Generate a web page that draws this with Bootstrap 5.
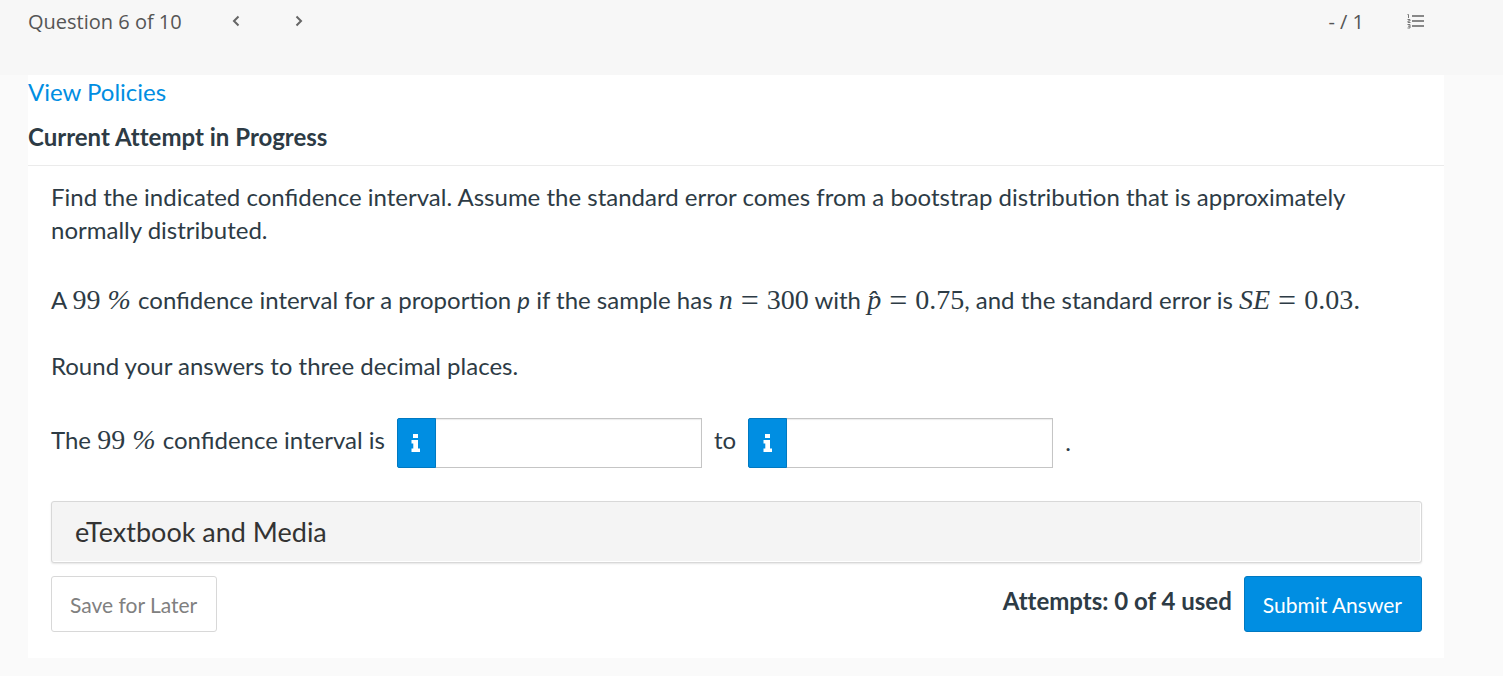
<!DOCTYPE html>
<html lang="en">
<head>
<meta charset="utf-8">
<meta name="viewport" content="width=device-width, initial-scale=1">
<title>Question 6 of 10</title>
<link href="https://cdn.jsdelivr.net/npm/bootstrap@5.3.0/dist/css/bootstrap.min.css" rel="stylesheet">
<style>
  body { background: #fafafa; color: #2d3b45; font-family: Lato, sans-serif; font-size: 24px; line-height: 33px; }
  .topbar { background: #f7f7f7; color: #555; font-family: "Open Sans", sans-serif; font-size: 20px; line-height: 28px; padding: 8px 78px 39px 28px; }
  .nav-icon { color: #666; width: 22px; height: 24px; padding: 0 0 2px; }
  .pager-prev { margin-left: 43px; }
  .pager-next { margin-left: 41px; }
  .toc { margin-left: 43px; width: auto; }
  .panel { background: #fff; margin: 0 59px 0 28px; padding-bottom: 26px; }
  .policies { color: #008ee2; }
  .attempt-title { font-size: 24px; line-height: 33px; border-bottom: 1px solid #ebebeb; padding: 12px 0; }
  .attempt-title, .used, .etext { font-variant-ligatures: none; }
  .question { padding: 14px 22px 0 23px; }
  .given { margin: 37px 0 33px; }
  .math { font-family: "Liberation Serif", serif; font-size: 28px; line-height: 24px; }
  .math .rel { font-size: 32px; line-height: 20px; margin: 0 8px; vertical-align: -2px; }
  .pct { margin: 0 1px 0 0; }
  .answer { margin-top: 36px; gap: 12px; }
  .answer label { padding-bottom: 8px; }
  .answer .stop { padding-bottom: 4px; }
  .answer .input-group { width: 305px; }
  .answer .btn { width: 39px; height: 50px; border-radius: 2px 0 0 2px; }
  .answer .form-control { border: 1px solid #c5c5c5; border-radius: 0; box-shadow: inset 0 1px 1px rgba(0,0,0,.08); }
  .btn-blue, .btn-blue:hover { background: #008ee2; border: 1px solid #0079c1; color: #fff; }
  .etext { background: #f4f4f4; border: 1px solid #d8d8d8; border-radius: 3px; box-shadow: inset -1px -1px 0 #fff, 0 1px 2px rgba(0,0,0,.1); color: #333; font-size: 27px; line-height: 34px; padding: 13px 23px; margin-top: 33px; }
  .actions { margin-top: 13px; }
  .actions .btn { font-size: 21px; line-height: 30px; padding: 13px 19px 11px 18px; border-radius: 3px; }
  .btn-save { background: #fff; border-color: #d8d8d8; color: #808080; }
  .used { padding-bottom: 7px; }
</style>
</head>
<body>
<header class="topbar d-flex align-items-center">
  <span>Question 6 of 10</span>
  <button class="nav-icon pager-prev btn border-0 d-flex align-items-center justify-content-center" aria-label="Previous question">
    <svg width="8" height="12" viewBox="0 0 8 12" fill="none" stroke="currentColor" stroke-width="2"><path d="M6.5 1.5 2 6l4.500 4.500"/></svg>
  </button>
  <button class="nav-icon pager-next btn border-0 d-flex align-items-center justify-content-center" aria-label="Next question">
    <svg width="8" height="12" viewBox="0 0 8 12" fill="none" stroke="currentColor" stroke-width="2"><path d="M1.500 1.500 6 6l-4.500 4.500"/></svg>
  </button>
  <span class="ms-auto">- / 1</span>
  <button class="nav-icon toc btn border-0 d-flex align-items-center" aria-label="Question list">
    <svg width="18" height="16" viewBox="0 0 18 16" fill="none" stroke="#888">
      <path stroke-width="2" d="M5 3h12M5 8h12M5 13h12"/>
      <path stroke="#777" stroke-width="1" d="M.5 1.500h1V5M.5 6.500H3V8H1v1.500h2.500M.5 11.500h2.500v3.500H.5M1 13.200h2"/>
    </svg>
  </button>
</header>

<main class="panel">
  <a href="#" class="policies text-decoration-none d-inline-block">View Policies</a>
  <h1 class="attempt-title fw-bold mb-0">Current Attempt in Progress</h1>
  <div class="question">
    <p class="mb-0">Find the indicated confidence interval. Assume the standard error comes from a bootstrap distribution that is approximately normally distributed.</p>
    <p class="given">A <span class="math">99 <i class="pct">%</i></span> confidence interval for a proportion <i>p</i> if the sample has <span class="math"><i>n</i><span class="rel">=</span>300</span> with <span class="math"><i>p&#770;</i><span class="rel">=</span>0.75</span>, and the standard error is <span class="math"><i>SE</i><span class="rel">=</span>0.03.</span></p>
    <p class="mb-0">Round your answers to three decimal places.</p>
    <div class="answer d-flex flex-wrap align-items-center">
      <label for="low">The <span class="math">99 <i class="pct">%</i></span> confidence interval is</label>
      <div class="input-group">
        <button class="btn btn-blue p-0 d-flex align-items-center justify-content-center" aria-label="Answer format"><svg width="10" height="18" viewBox="0 0 10 18" fill="currentColor"><path d="M2 0h5v4H2zM.5 6H7v8.500h2V18H.5v-3.500h1.800V9.500H.5z"/></svg></button>
        <input id="low" class="form-control" type="text">
      </div>
      <label for="high">to</label>
      <div class="input-group">
        <button class="btn btn-blue p-0 d-flex align-items-center justify-content-center" aria-label="Answer format"><svg width="10" height="18" viewBox="0 0 10 18" fill="currentColor"><path d="M2 0h5v4H2zM.5 6H7v8.500h2V18H.5v-3.500h1.800V9.500H.5z"/></svg></button>
        <input id="high" class="form-control" type="text">
      </div>
      <span class="stop">.</span>
    </div>
    <button class="etext d-block w-100 text-start">eTextbook and Media</button>
    <div class="actions d-flex align-items-center">
      <button class="btn btn-save">Save for Later</button>
      <span class="used fw-bold ms-auto me-2 pe-1">Attempts: 0 of 4 used</span>
      <button class="btn btn-blue">Submit Answer</button>
    </div>
  </div>
</main>
<script src="https://cdn.jsdelivr.net/npm/bootstrap@5.3.0/dist/js/bootstrap.bundle.min.js"></script>
</body>
</html>
